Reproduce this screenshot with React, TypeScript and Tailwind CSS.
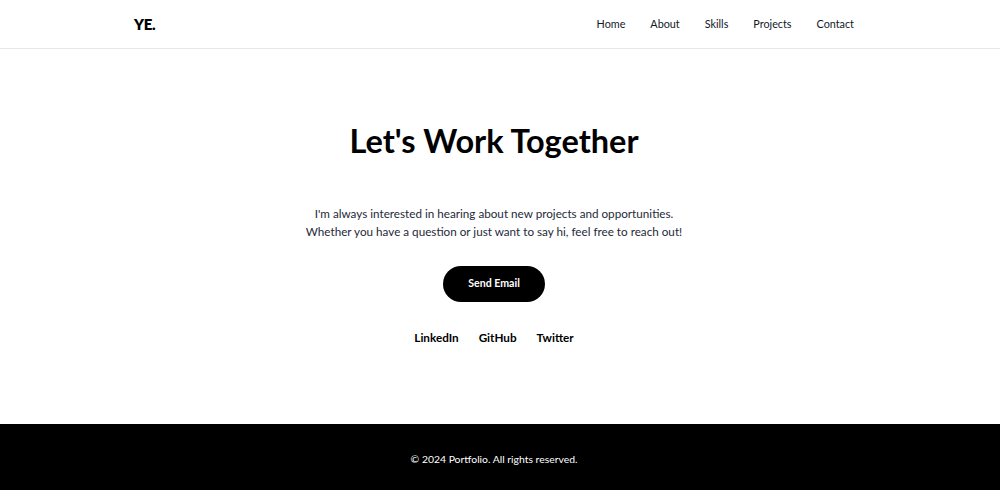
const links = ["Home", "About", "Skills", "Projects", "Contact"];

export default function App() {
  return (
    <div className="min-h-screen bg-white text-black" style={{ fontFamily: 'Lato, sans-serif' }}>
      <header className="h-[49px] border-b border-gray-200 pr-3">
        <div className="mx-auto flex h-[48px] w-[720px] items-center justify-between">
          <span className="text-[15px] font-extrabold tracking-tight">YE.</span>
          <nav className="flex gap-[25px] text-[10.8px] text-gray-900">
            {links.map((l) => (
              <a key={l} href="#">{l}</a>
            ))}
          </nav>
        </div>
      </header>

      <main className="flex h-[375px] flex-col items-center pt-[74px] pr-3 text-center">
        <h1 className="text-[32.5px] font-bold leading-[36px]">Let's Work Together</h1>
        <p className="mt-[45px] text-[11.7px] leading-[18px] text-gray-800">
          I'm always interested in hearing about new projects and opportunities.
          <br />
          Whether you have a question or just want to say hi, feel free to reach out!
        </p>
        <button className="mt-[26px] h-[36px] w-[102px] rounded-full bg-black text-[10.6px] font-bold text-white">
          Send Email
        </button>
        <div className="mt-[26px] flex gap-[20px] text-[11.7px] font-bold leading-[18px]">
          <a href="#">LinkedIn</a>
          <a href="#">GitHub</a>
          <a href="#">Twitter</a>
        </div>
      </main>

      <footer className="h-[66px] bg-black pt-[27px] pr-3 text-center text-[10.4px] leading-[16px] text-white">
        © 2024 Portfolio. All rights reserved.
      </footer>
    </div>
  );
}
